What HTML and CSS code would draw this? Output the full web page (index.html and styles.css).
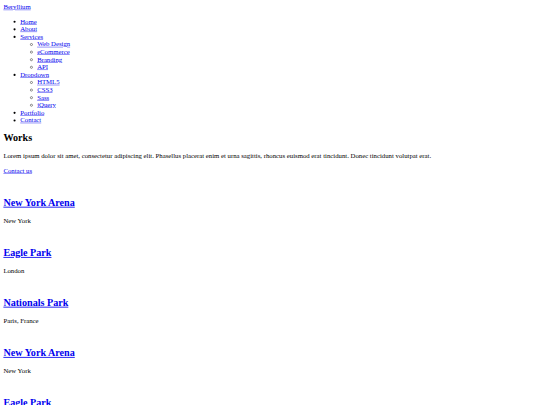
FILE: index.html
```html
<!DOCTYPE html>
<html lang="en">
<head>
  <meta charset="UTF-8">
  <meta name="viewport" content="width=device-width, initial-scale=1.0">
  <title>Beryllium - Works</title>
  <link rel="stylesheet" href="styles.css">
</head>
<body>
  <div class="page">
    <header class="site-header">
      <a href="#" class="logo">Beryllium</a>
      <nav>
        <ul class="menu">
          <li><a href="#">Home</a></li>
          <li><a href="#">About</a></li>
          <li><a href="#">Services</a>
            <ul class="sub-menu">
              <li><a href="#">Web Design</a></li>
              <li><a href="#">eCommerce</a></li>
              <li><a href="#">Branding</a></li>
              <li><a href="#">API</a></li>
            </ul>
          </li>
          <li><a href="#">Dropdown</a>
            <ul class="sub-menu">
              <li><a href="#">HTML5</a></li>
              <li><a href="#">CSS3</a></li>
              <li><a href="#">Sass</a></li>
              <li><a href="#">jQuery</a></li>
            </ul>
          </li>
          <li><a href="#">Portfolio</a></li>
          <li><a href="#">Contact</a></li>
        </ul>
      </nav>
    </header>

    <main>
      <section class="intro">
        <h2>Works</h2>
        <p>Lorem ipsum dolor sit amet, consectetur adipiscing elit. Phasellus placerat enim et urna sagittis, rhoncus euismod erat tincidunt. Donec tincidunt volutpat erat.</p>
        <p><a href="#">Contact us</a></p>
      </section>

      <div class="works">
        <div class="work">
          <div class="work-thumb"></div>
          <h2><a href="#">New York Arena</a></h2>
          <p>New York</p>
        </div>
        <div class="work">
          <div class="work-thumb"></div>
          <h2><a href="#">Eagle Park</a></h2>
          <p>London</p>
        </div>
        <div class="work">
          <div class="work-thumb"></div>
          <h2><a href="#">Nationals Park</a></h2>
          <p>Paris, France</p>
        </div>
        <div class="work">
          <div class="work-thumb"></div>
          <h2><a href="#">New York Arena</a></h2>
          <p>New York</p>
        </div>
        <div class="work">
          <div class="work-thumb"></div>
          <h2><a href="#">Eagle Park</a></h2>
          <p>London</p>
        </div>
      </div>
    </main>
  </div>
</body>
</html>
```

FILE: styles.css
```css
html, body {
  margin: 0;
  height: 100%;
  overflow: hidden;
  background: #fff;
}

.page {
  box-sizing: border-box;
  width: 1280px;
  padding: 8px;
  font-family: "Liberation Serif", "Times New Roman", serif;
  font-size: 16px;
  color: #000;
  transform: scale(0.421875);
  transform-origin: 0 0;
}

a {
  color: #0000ee;
  text-decoration: underline;
}

.menu {
  margin: 16px 0;
  padding-left: 40px;
  list-style: disc;
}

.sub-menu {
  margin: 0;
  padding-left: 40px;
  list-style: circle;
}

h2 {
  font-size: 24px;
  font-weight: bold;
  margin: 0.83em 0;
}

p {
  margin: 16px 0;
}

.work-thumb {
  height: 18px;
}
```
